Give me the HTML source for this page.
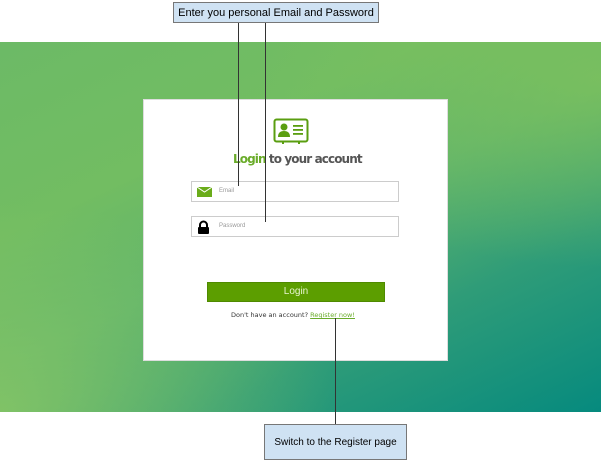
<html><head><style>
body{margin:0;width:601px;height:460px;position:relative;background:#fff;font-family:"Liberation Sans",sans-serif;overflow:hidden}
.bg{position:absolute;left:0;top:42px;width:601px;height:370px;background:linear-gradient(155deg,#6cba66 0%,#72bd62 30%,#5fb46c 50%,#2f9c78 72%,#068a7e 100%)}
.bg2{position:absolute;left:0;top:42px;width:601px;height:370px;background:radial-gradient(ellipse at 0% 100%,rgba(140,200,100,.8),transparent 40%),radial-gradient(ellipse at 100% 10%,rgba(130,195,90,.7),transparent 40%)}
.card{position:absolute;left:143px;top:99px;width:303px;height:260px;background:#fff;border:1px solid #ddd}
.cb{position:absolute;background:#cfe2f3;border:1px solid #777;font-size:11px;color:#000;display:flex;align-items:center;justify-content:center}
.ln{position:absolute;width:1px;background:#333}
.inp{position:absolute;left:191px;width:206px;height:19px;border:1px solid #ccc;background:#fff;font-size:6px;color:#999}
.inp span{position:absolute;left:27px;top:6px}
</style></head><body>
<div class="bg"></div><div class="bg2"></div>
<div class="card"></div>
<svg style="position:absolute;left:273px;top:118px" width="36" height="26" viewBox="0 0 36 26">
<rect x="1.5" y="1.5" width="33" height="22" rx="2" fill="none" stroke="#5a9e10" stroke-width="2"/>
<circle cx="11" cy="9" r="3.5" fill="#5a9e10"/><path d="M5 19q0-6 6-6t6 6z" fill="#5a9e10"/>
<rect x="20" y="7" width="10" height="1.8" fill="#5a9e10"/><rect x="20" y="11" width="10" height="1.8" fill="#5a9e10"/><rect x="20" y="15" width="10" height="1.8" fill="#5a9e10"/>
<rect x="9" y="23" width="2" height="3" fill="#5a9e10"/><rect x="25" y="23" width="2" height="3" fill="#5a9e10"/>
</svg>
<div style="position:absolute;left:233px;top:152px;font-size:12px;font-weight:bold;color:#555;font-family:'DejaVu Sans',sans-serif;letter-spacing:-.9px"><span style="color:#6aac2a">Login</span> to your account</div>
<div class="inp" style="top:181px"><svg style="position:absolute;left:5px;top:5px" width="15" height="10"><rect width="15" height="10" fill="#6aac1a"/><path d="M0 0l7.5 5 7.5-5" stroke="#fff" fill="none" stroke-width="1"/></svg><span>Email</span></div>
<div class="inp" style="top:216px"><svg style="position:absolute;left:5px;top:3px" width="13" height="14"><path d="M3 7V5a3.5 3.5 0 0 1 7 0v2" stroke="#000" stroke-width="2" fill="none"/><rect x="1" y="7" width="11" height="7" rx="1"/></svg><span>Password</span></div>
<div style="position:absolute;left:207px;top:282px;width:176px;height:18px;background:#5c9e00;border:1px solid #4f8a00;color:#e8f5d0;font-size:10px;text-align:center;line-height:18px">Login</div>
<div style="position:absolute;left:231px;top:311px;font-size:6.5px;color:#333;font-family:'DejaVu Sans',sans-serif">Don't have an account? <span style="color:#6aac2a;text-decoration:underline">Register now!</span></div>
<div class="ln" style="left:238px;top:22px;height:164px"></div>
<div class="ln" style="left:265px;top:22px;height:200px"></div>
<div class="ln" style="left:335px;top:318px;height:106px"></div>
<div class="cb" style="left:173px;top:2px;width:204px;height:19px">Enter you personal Email and Password</div>
<div class="cb" style="left:264px;top:424px;width:141px;height:34px;font-size:10px">Switch to the Register page</div>
</body></html>
